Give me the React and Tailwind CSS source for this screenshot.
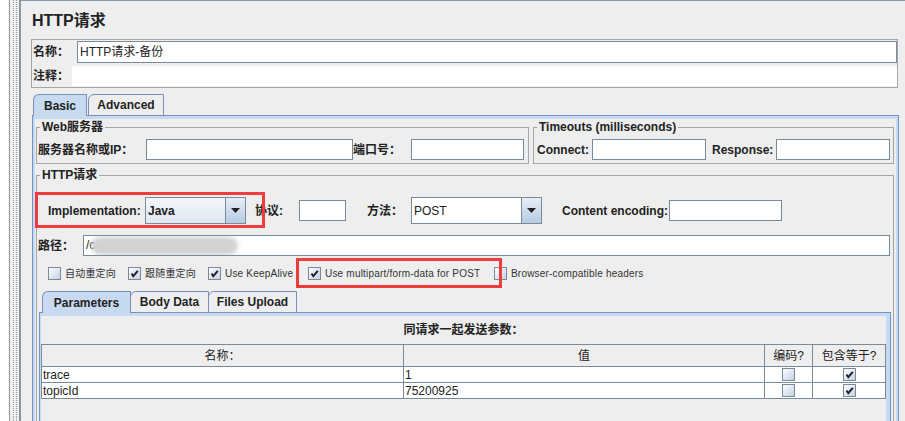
import React from 'react';

const FONT = "font-['Liberation_Sans','Noto_Sans_CJK_SC',sans-serif]";

const Input = ({ className = '', children }) => (
  <div className={`relative h-[21px] shrink-0 border border-[#7a8a99] bg-white ${className}`}>{children}</div>
);

const Label = ({ className = '', children }) => (
  <div className={`shrink-0 whitespace-nowrap text-[12px] font-bold text-[#222] ${className}`}>{children}</div>
);

const Arrow = () => (
  <svg width="9" height="5" viewBox="0 0 9 5">
    <path d="M0 0h9L4.5 5z" fill="#222" />
  </svg>
);

const Combo = ({ value, className = '', fieldClass = '' }) => (
  <div className={`flex h-[27px] shrink-0 border border-[#7a8a99] ${className}`}>
    <div className={`flex flex-1 items-center pl-[2px] text-[12px] text-[#222] ${fieldClass}`}>{value}</div>
    <div className="flex w-[20px] items-center justify-center border-l border-[#7a8a99] bg-linear-to-b from-[#e6eef8] to-[#b7cbe2]">
      <Arrow />
    </div>
  </div>
);

const Check = ({ checked }) => (
  <div className="flex h-[13px] w-[13px] shrink-0 items-center justify-center border border-[#7a8a99] bg-linear-to-br from-white to-[#c3d1e3]">
    {checked && (
      <svg width="9" height="9" viewBox="0 0 9 9">
        <path d="M1.5 4.5 L3.3 7.2 L7.8 1.8" stroke="#222" strokeWidth="2" fill="none" />
      </svg>
    )}
  </div>
);

const Opt = ({ checked, label, className = '' }) => (
  <div className={`flex shrink-0 items-center gap-[4px] ${className}`}>
    <Check checked={checked} />
    <span className="whitespace-nowrap text-[10px] tracking-[0.2px] text-[#333]">{label}</span>
  </div>
);

const Tab = ({ label, active, className = '' }) => (
  <div
    className={`flex h-[22px] shrink-0 items-center justify-center rounded-tl-[6px] border-x border-t border-[#7a8fb8] text-[12px] font-bold text-[#222] ${
      active ? 'relative z-10 bg-[#c8daf0]' : 'border-b bg-[#eeeeee]'
    } ${className}`}
  >
    {label}
  </div>
);

const rows = [
  { name: 'trace', value: '1' },
  { name: 'topicId', value: '75200925' },
];

export default function App() {
  return (
    <div className={`relative flex h-[421px] w-[905px] overflow-hidden bg-[#eeeeee] ${FONT}`}>
      {/* left splitter */}
      <div className="flex h-full w-[21px] shrink-0">
        <div className="w-[9px] bg-white" />
        <div className="w-[1px] bg-[#a0a0a0]" />
        <div className="w-[3px]" />
        <div className="w-[4px] border-x border-dotted border-[#9a9a9a]" />
        <div className="w-[2px]" />
        <div className="w-[2px] bg-[#8c96a0]" />
      </div>

      {/* main */}
      <div className="flex-1 border-t border-[#8a97a5]">
        <div className="pl-[11px] pt-[10px] text-[16px] font-bold leading-[19px] text-[#222]">HTTP请求</div>

        <div className="ml-[10px] mt-[9px] h-[49px] w-[867px] border border-[#a5a5a5]">
          <div className="flex h-[23px] items-center">
            <Label className="w-[45px] pl-[1px]">名称：</Label>
            <Input className="h-[22px] flex-1">
              <div className="pl-[2px] text-[12px] leading-[20px] text-[#222]">HTTP请求-备份</div>
            </Input>
          </div>
          <div className="flex h-[23px] items-end">
            <Label className="w-[40px] pl-[1px] leading-[20px]">注释：</Label>
            <div className="h-[20px] flex-1 bg-white" />
          </div>
        </div>

        {/* tabs */}
        <div className="ml-[12px] mt-[6px] flex">
          <Tab label="Basic" active className="w-[54px]" />
          <Tab label="Advanced" className="ml-[1px] w-[76px]" />
        </div>

        <div className="-mt-px ml-[11px] w-[867px] border border-[#7592c8]">
          <div className="border-x-2 border-t-[3px] border-[#c8daf0] bg-[#eeeeee] pb-[60px]">
            <div className="ml-[1px] mt-[1px] flex gap-[4px]">
              <fieldset className="w-[493px] border border-[#a5a5a5]">
                <legend className="ml-[3px] px-[2px] text-[12px] font-bold leading-[15px] text-[#222]">Web服务器</legend>
                <div className="flex items-center pb-[3px] pt-[4px]">
                  <Label className="w-[109px] pl-[1px]">服务器名称或IP：</Label>
                  <Input className="w-[207px]" />
                  <Label className="w-[58px]">端口号：</Label>
                  <Input className="w-[113px]" />
                </div>
              </fieldset>
              <fieldset className="w-[361px] border border-[#a5a5a5]">
                <legend className="ml-[3px] px-[2px] text-[12px] font-bold leading-[15px] text-[#222]">Timeouts (milliseconds)</legend>
                <div className="flex items-center pb-[3px] pt-[4px]">
                  <Label className="w-[58px] pl-[3px]">Connect:</Label>
                  <Input className="w-[114px]" />
                  <Label className="w-[70px] pl-[6px]">Response:</Label>
                  <Input className="w-[114px]" />
                </div>
              </fieldset>
            </div>

            <fieldset className="ml-[1px] mt-[4px] w-[858px] border border-[#a5a5a5] pb-[80px]">
              <legend className="ml-[3px] px-[2px] text-[12px] font-bold leading-[15px] text-[#222]">HTTP请求</legend>

              <div className="mt-[14px] flex h-[27px] items-center">
                <Label className="w-[108px] pl-[11px]">Implementation:</Label>
                <Combo value="Java" className="w-[101px]" fieldClass="font-bold bg-linear-to-b from-[#f4f7fb] to-[#dfe7f1]" />
                <Label className="w-[53px] pl-[9px]">协议:</Label>
                <Input className="w-[47px]" />
                <Label className="w-[65px] pl-[21px]">方法：</Label>
                <Combo value="POST" className="w-[131px]" fieldClass="bg-white" />
                <Label className="w-[127px] pl-[20px]">Content encoding:</Label>
                <Input className="w-[113px]" />
              </div>

              <div className="mt-[11px] flex items-center">
                <Label className="w-[46px] pl-[1px]">路径：</Label>
                <Input className="w-[807px] overflow-hidden">
                  <div className="pl-[2px] text-[12px] leading-[19px] text-[#222]">/c</div>
                  <div className="absolute left-[7px] top-[1px] h-[18px] w-[147px] rounded-full bg-[#d2d2d2] blur-[2px]" />
                </Input>
              </div>

              <div className="mt-[6px] flex h-[22px] items-center pl-[11px]">
                <Opt label="自动重定向" className="w-[80px]" />
                <Opt checked label="跟随重定向" className="w-[80px]" />
                <Opt checked label="Use KeepAlive" className="w-[100px]" />
                <Opt checked label="Use multipart/form-data for POST" className="w-[186px]" />
                <Opt label="Browser-compatible headers" />
              </div>

              <div className="ml-[5px] mt-[7px] flex">
                <Tab label="Parameters" active className="w-[89px]" />
                <Tab label="Body Data" className="-ml-px w-[79px]" />
                <Tab label="Files Upload" className="-ml-px w-[89px]" />
              </div>

              <div className="-mt-px ml-[2px] w-[852px] border border-[#7592c8]">
                <div className="border-l border-r-[4px] border-t-[3px] border-[#c8daf0] bg-[#eeeeee] pb-[40px]">
                  <div className="flex h-[28px] items-center justify-center text-[12px] font-bold text-[#222]">同请求一起发送参数：</div>
                  <div className="w-[845px] border-l border-t border-[#7a8a99] text-[12px] text-[#222]">
                    <div className="grid h-[22px] grid-cols-[362px_361px_48px_73px] bg-[#eeeeee]">
                      {['名称：', '值', '编码?', '包含等于?'].map((h) => (
                        <div key={h} className="flex items-center justify-center border-b border-r border-[#7a8a99]">
                          {h}
                        </div>
                      ))}
                    </div>
                    {rows.map((r) => (
                      <div key={r.name} className="grid h-[16px] grid-cols-[362px_361px_48px_73px] bg-white">
                        <div className="flex items-center border-b border-r border-[#7a8a99] pl-[1px] leading-none">{r.name}</div>
                        <div className="flex items-center border-b border-r border-[#7a8a99] pl-[1px] leading-none">{r.value}</div>
                        <div className="flex items-center justify-center border-b border-r border-[#7a8a99]">
                          <Check />
                        </div>
                        <div className="flex items-center justify-center border-b border-r border-[#7a8a99]">
                          <Check checked />
                        </div>
                      </div>
                    ))}
                  </div>
                </div>
              </div>
            </fieldset>
          </div>
        </div>
      </div>

      {/* annotation boxes */}
      <div className="absolute left-[35px] top-[192px] h-[36px] w-[230px] border-[3px] border-[#f03c3c]" />
      <div className="absolute left-[296px] top-[258px] h-[30px] w-[206px] border-[3px] border-[#f03c3c]" />
    </div>
  );
}
